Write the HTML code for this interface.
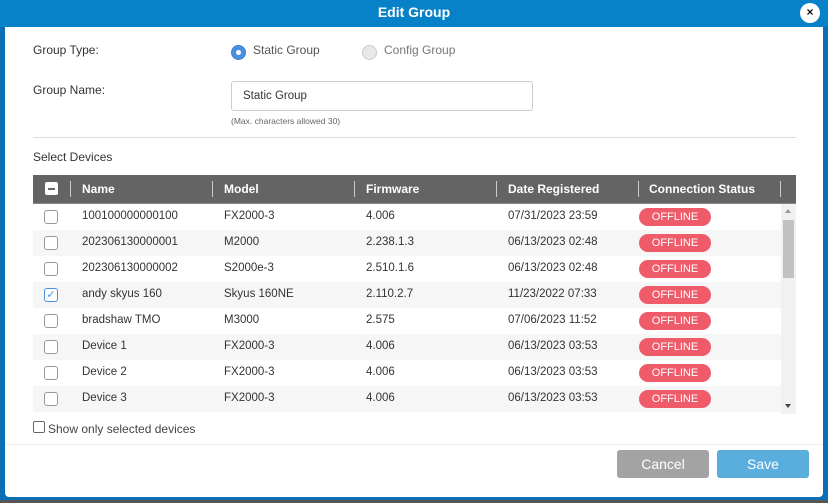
<!DOCTYPE html>
<html><head><meta charset="utf-8"><style>
*{box-sizing:border-box;margin:0;padding:0}
body{width:828px;height:503px;background:#0a6fb5;font-family:"Liberation Sans",sans-serif;font-size:12px;color:#333;position:relative;overflow:hidden}
.hdr{position:absolute;left:0;top:0;width:828px;height:27px;background:#0782c9;color:#fff;font-weight:bold;font-size:14px;text-align:center;line-height:25px}
.close{position:absolute;left:800px;top:3px;width:20px;height:20px;border-radius:50%;background:#fff;color:#111;font-size:12px;font-weight:bold;line-height:19px;text-align:center}
.panel{position:absolute;left:5px;top:27px;width:818px;height:470px;background:#fff;border-radius:0 0 4px 4px}
.bot{position:absolute;left:0;top:500px;width:828px;height:3px;background:#555}
.abs{position:absolute}
.lbl{font-size:12px;color:#333}
.radio{position:absolute;width:15px;height:15px;border-radius:50%}
.tbl{position:absolute;left:33px;top:175px;width:763px}
.th{height:29px;background:#646464;color:#fff;font-weight:bold;font-size:12px;position:relative;border-bottom:1px solid #888}
.th span{position:absolute;top:7px}
.sep{position:absolute;top:6px;width:1px;height:16px;background:#ccc}
.row{height:26px;position:relative;font-size:11.5px}
.row span{position:absolute;top:6px}
.cb{position:absolute;left:11px;top:6px;width:14px;height:14px;border:1px solid #999;border-radius:3px;background:#fff}
.badge{position:absolute;left:606px;top:4px;width:72px;height:18px;border-radius:9px;background:#ef5b68;color:#fff;font-size:11px;text-align:center;line-height:18px}
.btn{position:absolute;top:450px;width:92px;height:28px;border-radius:3px;color:#fff;font-size:14px;text-align:center;line-height:28px}
</style></head><body>
<div class="hdr">Edit Group</div>
<div class="close">×</div>
<div class="panel"></div>
<div class="bot"></div>

<div class="abs lbl" style="left:33px;top:43px">Group Type:</div>
<div class="radio" style="left:231px;top:45px;background:#4a90e2;border:1px solid #3a7fd0"><div style="position:absolute;left:4px;top:4px;width:5px;height:5px;border-radius:50%;background:#fff"></div></div>
<div class="abs lbl" style="left:253px;top:43px;color:#555">Static Group</div>
<div class="radio" style="left:362px;top:45px;background:#e8e8e8;border:1px solid #ccc"></div>
<div class="abs lbl" style="left:384px;top:43px;color:#777">Config Group</div>

<div class="abs lbl" style="left:33px;top:83px">Group Name:</div>
<div class="abs" style="left:231px;top:81px;width:302px;height:30px;border:1px solid #ccc;border-radius:3px;padding:8px 11px;font-size:11.5px">Static Group</div>
<div class="abs" style="left:231px;top:116px;font-size:8.5px;color:#666">(Max. characters allowed 30)</div>
<div class="abs" style="left:33px;top:137px;width:763px;height:1px;background:#ddd"></div>
<div class="abs lbl" style="left:33px;top:150px">Select Devices</div>

<div class="tbl">
<div class="th">
<div style="position:absolute;left:12px;top:7px;width:13px;height:13px;background:#fff;border-radius:2px"><div style="position:absolute;left:3px;top:6px;width:7px;height:2px;background:#666"></div></div>
<div class="sep" style="left:37px"></div>
<span style="left:49px">Name</span><div class="sep" style="left:179px"></div>
<span style="left:191px">Model</span><div class="sep" style="left:321px"></div>
<span style="left:333px">Firmware</span><div class="sep" style="left:463px"></div>
<span style="left:475px">Date Registered</span><div class="sep" style="left:605px"></div>
<span style="left:616px">Connection Status</span><div class="sep" style="left:747px"></div>
</div>
<div style="position:relative;height:210px;overflow:hidden">
<div class="row" style="background:#fff"><div class="cb"></div><span style="left:49px">100100000000100</span><span style="left:191px">FX2000-3</span><span style="left:333px">4.006</span><span style="left:475px">07/31/2023 23:59</span><div class="badge">OFFLINE</div></div>
<div class="row" style="background:#f6f6f6"><div class="cb"></div><span style="left:49px">202306130000001</span><span style="left:191px">M2000</span><span style="left:333px">2.238.1.3</span><span style="left:475px">06/13/2023 02:48</span><div class="badge">OFFLINE</div></div>
<div class="row" style="background:#fff"><div class="cb"></div><span style="left:49px">202306130000002</span><span style="left:191px">S2000e-3</span><span style="left:333px">2.510.1.6</span><span style="left:475px">06/13/2023 02:48</span><div class="badge">OFFLINE</div></div>
<div class="row" style="background:#f6f6f6"><div class="cb" style="border-color:#4a90e2;color:#4a90e2;font-size:11px;line-height:12px;text-align:center">✓</div><span style="left:49px">andy skyus 160</span><span style="left:191px">Skyus 160NE</span><span style="left:333px">2.110.2.7</span><span style="left:475px">11/23/2022 07:33</span><div class="badge">OFFLINE</div></div>
<div class="row" style="background:#fff"><div class="cb"></div><span style="left:49px">bradshaw TMO</span><span style="left:191px">M3000</span><span style="left:333px">2.575</span><span style="left:475px">07/06/2023 11:52</span><div class="badge">OFFLINE</div></div>
<div class="row" style="background:#f6f6f6"><div class="cb"></div><span style="left:49px">Device 1</span><span style="left:191px">FX2000-3</span><span style="left:333px">4.006</span><span style="left:475px">06/13/2023 03:53</span><div class="badge">OFFLINE</div></div>
<div class="row" style="background:#fff"><div class="cb"></div><span style="left:49px">Device 2</span><span style="left:191px">FX2000-3</span><span style="left:333px">4.006</span><span style="left:475px">06/13/2023 03:53</span><div class="badge">OFFLINE</div></div>
<div class="row" style="background:#f6f6f6"><div class="cb"></div><span style="left:49px">Device 3</span><span style="left:191px">FX2000-3</span><span style="left:333px">4.006</span><span style="left:475px">06/13/2023 03:53</span><div class="badge">OFFLINE</div></div>
<div class="row" style="background:#fff"><div class="badge"></div></div>
<div style="position:absolute;left:748px;top:0;width:15px;height:210px;background:#f1f1f1">
<div style="position:absolute;left:4px;top:5px;width:0;height:0;border-left:3px solid transparent;border-right:3px solid transparent;border-bottom:4px solid #999"></div>
<div style="position:absolute;left:2px;top:16px;width:11px;height:58px;background:#c1c1c1"></div>
<div style="position:absolute;left:4px;top:200px;width:0;height:0;border-left:3px solid transparent;border-right:3px solid transparent;border-top:4px solid #444"></div>
</div>
</div>
</div>

<div class="abs" style="left:33px;top:421px;width:12px;height:12px;border:1px solid #666;border-radius:2px"></div>
<div class="abs lbl" style="left:48px;top:422px;color:#444">Show only selected devices</div>
<div class="abs" style="left:5px;top:444px;width:818px;height:1px;background:#eee"></div>
<div class="btn" style="left:617px;background:#a3a3a3">Cancel</div>
<div class="btn" style="left:717px;background:#5aaede">Save</div>
</body></html>
